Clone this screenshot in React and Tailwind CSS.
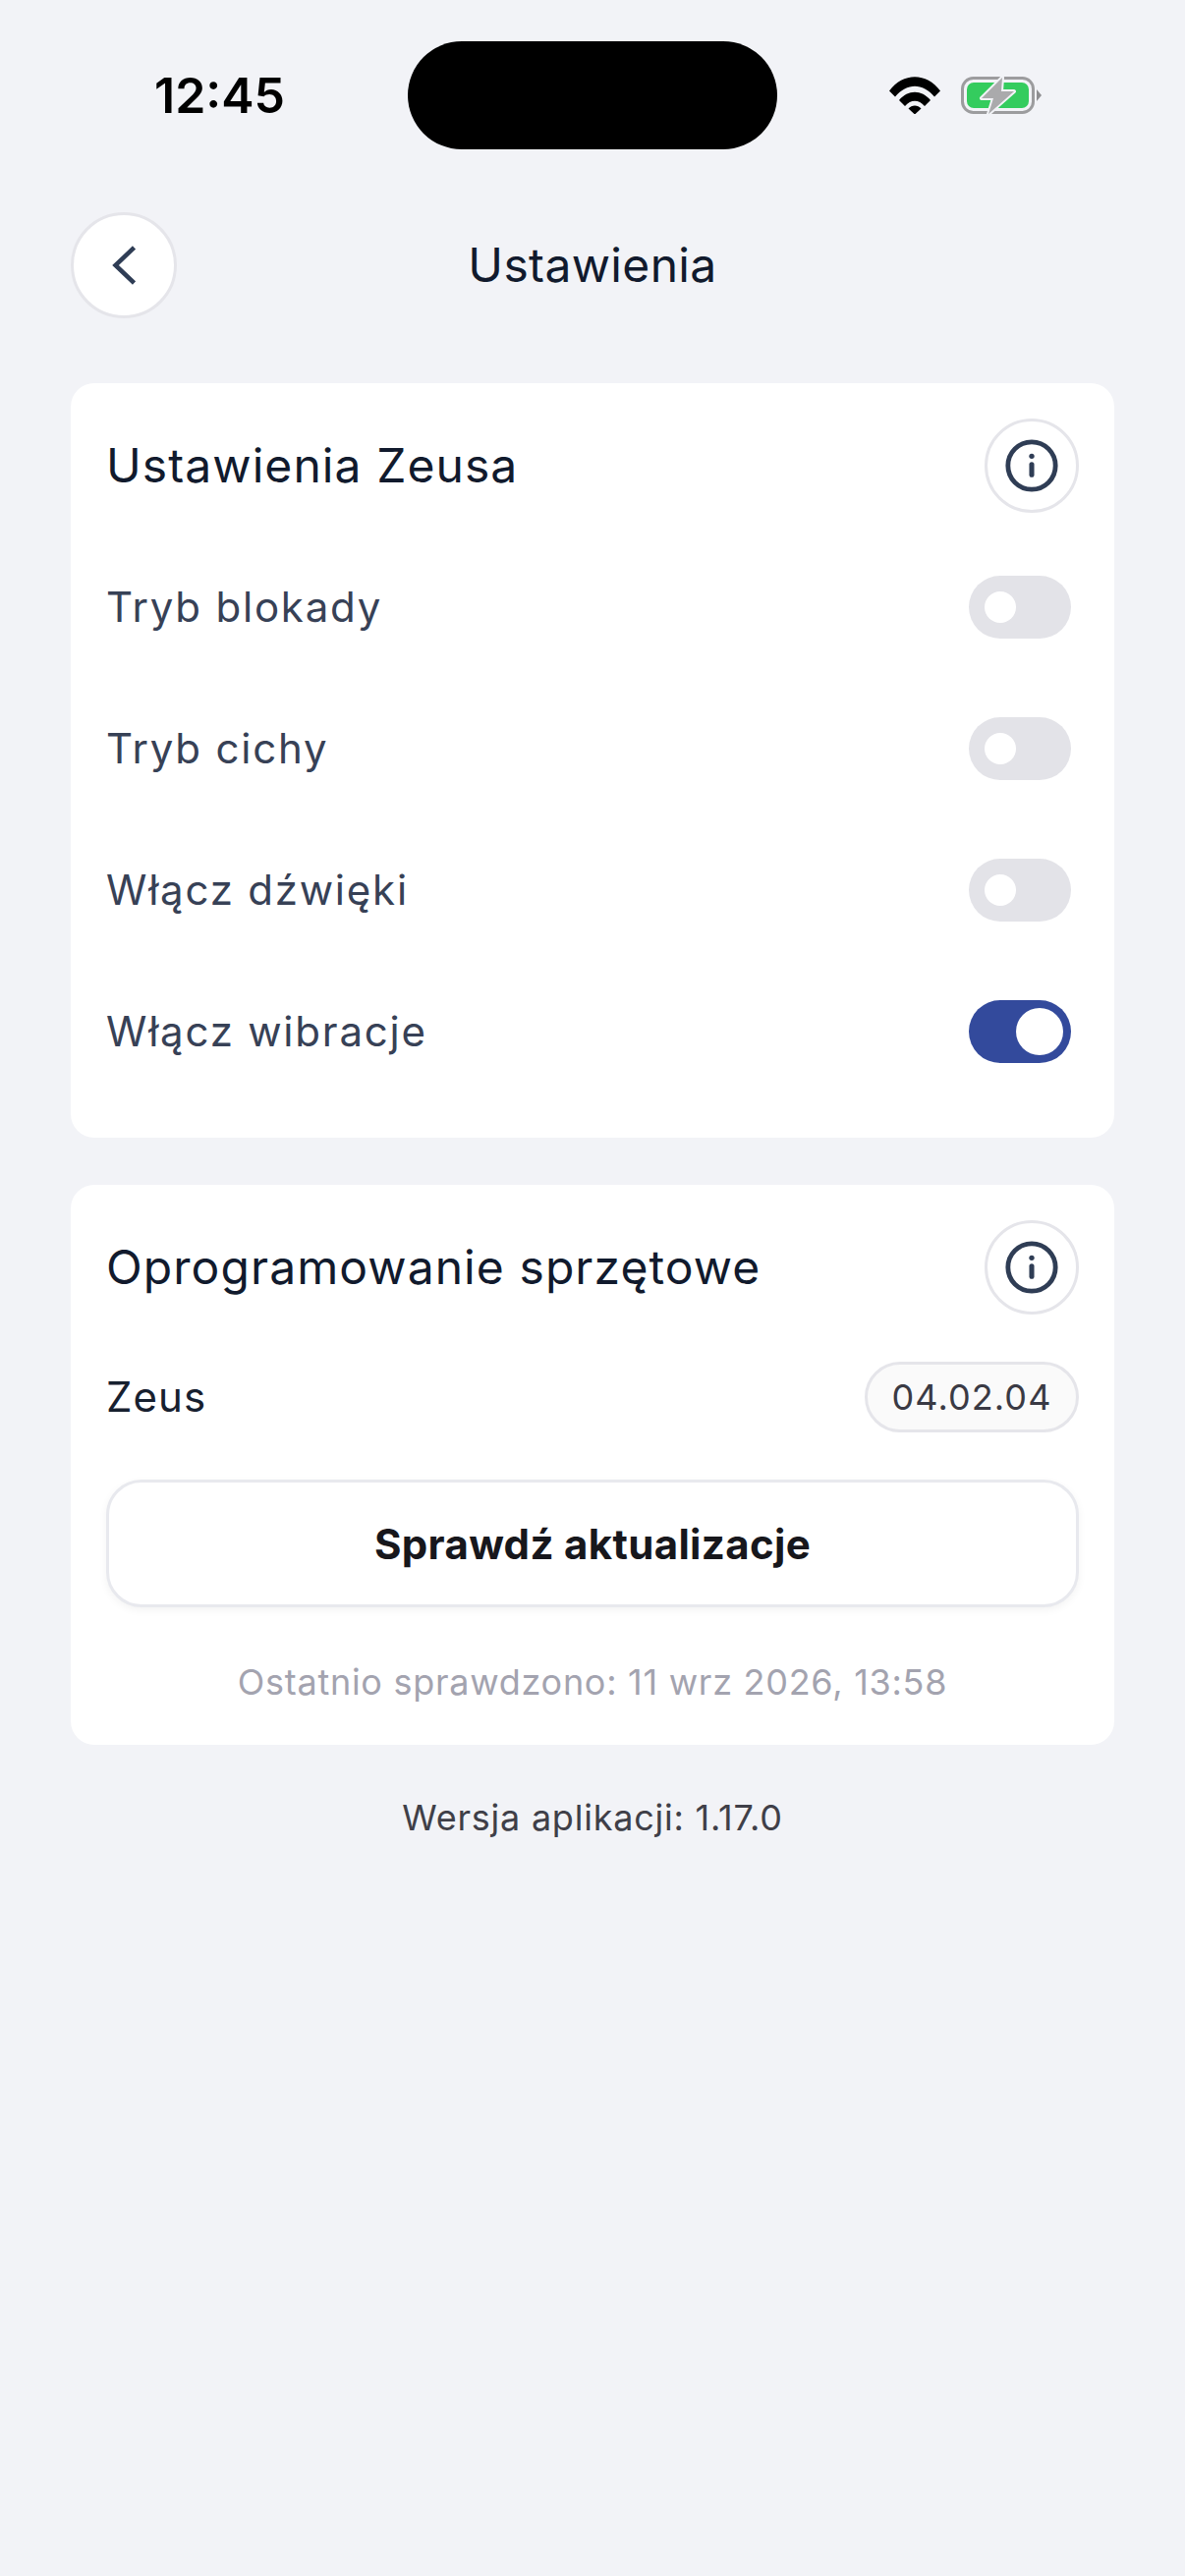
const font = { fontFamily: '"Inter", "Noto Sans", sans-serif' };

function InfoButton() {
  return (
    <button className="flex h-[96px] w-[96px] shrink-0 items-center justify-center rounded-full border-[3px] border-[#e5e5ea] bg-white">
      <svg width="58" height="58" viewBox="0 0 24 24" fill="none" stroke="#2f3d55" strokeWidth="2" strokeLinecap="round">
        <circle cx="12" cy="12" r="10" />
        <path d="M12 11.5v4.3" strokeWidth="2.1" />
        <circle cx="12" cy="8" r="1.1" fill="#2f3d55" stroke="none" />
      </svg>
    </button>
  );
}

function Toggle({ on }) {
  return on ? (
    <div className="mr-[8px] flex h-[64px] w-[104px] items-center justify-end rounded-full bg-[#334a9c] pr-[8px]">
      <div className="h-[48px] w-[48px] rounded-full bg-white" />
    </div>
  ) : (
    <div className="mr-[8px] flex h-[64px] w-[104px] items-center rounded-full bg-[#e3e3e8] pl-[16px]">
      <div className="h-[32px] w-[32px] rounded-full bg-white" />
    </div>
  );
}

function Row({ label, on }) {
  return (
    <div className="flex h-[64px] items-center justify-between">
      <span className="text-[42px] font-normal leading-none tracking-[1.78px] text-[#374156]">{label}</span>
      <Toggle on={on} />
    </div>
  );
}

export default function App() {
  return (
    <div style={font} className="min-h-[2622px] bg-[#f2f3f7]">
      <div className="flex items-center pl-[157px] pt-[42px]">
        <span className="w-[258px] text-[50px] font-semibold leading-none text-black">12:45</span>
        <div className="h-[110px] w-[376px] rounded-full bg-black" />
        <svg className="ml-[114px]" width="52" height="38" viewBox="0 0 52 38">
          <path d="M0 14.5 C14 -4.5 38 -4.5 52 14.5 L46 20.5 C34 6 18 6 6 20.5Z" fill="#000" />
          <path d="M10 24 C19 13 33 13 42 24 L36 30 C30 23 22 23 16 30Z" fill="#000" />
          <path d="M19.5 32.5 C23 28.5 29 28.5 32.5 32.5 L26 38.5Z" fill="#000" />
        </svg>
        <svg className="ml-[21px]" width="82" height="38" viewBox="0 0 82 38">
          <rect x="1.5" y="1.5" width="72" height="35" rx="11" fill="none" stroke="#9c9c9e" strokeWidth="3" />
          <rect x="6" y="6" width="63" height="26" rx="7" fill="#34cc5e" />
          <path d="M77 13 L82 19 L77 25 Z" fill="#8e8e90" />
          <path d="M42 1 L21 22 H33 L28 38 L54 15 H41 Z" fill="#aaaaac" stroke="#f2f3f7" strokeWidth="4" strokeLinejoin="round" paintOrder="stroke" />
        </svg>
      </div>

      <div className="mt-[64px] grid grid-cols-[108px_1fr_108px] items-center px-[72px]">
        <button className="flex h-[108px] w-[108px] items-center justify-center rounded-full border-[3px] border-[#e5e5ea] bg-white">
          <svg width="24" height="40" viewBox="0 0 24 40" fill="none" stroke="#2f3d55" strokeWidth="4.5" strokeLinejoin="miter">
            <path d="M22.5 2 L3.5 20 L22.5 38" />
          </svg>
        </button>
        <h1 className="text-center text-[48px] font-normal leading-none tracking-[0.35px] text-[#111a2d]">Ustawienia</h1>
        <div />
      </div>

      <div className="mx-[72px] mt-[66px] flex flex-col gap-[48px]">
        <section className="rounded-[24px] bg-white px-[36px] pb-[76px] pt-[36px]">
          <div className="mb-[64px] flex items-center justify-between">
            <h2 className="text-[48px] font-normal leading-none tracking-[1.08px] text-[#111a2d]">Ustawienia Zeusa</h2>
            <InfoButton />
          </div>
          <div className="flex flex-col gap-[80px]">
            <Row label="Tryb blokady" />
            <Row label="Tryb cichy" />
            <Row label="Włącz dźwięki" />
            <Row label="Włącz wibracje" on />
          </div>
        </section>

        <section className="rounded-[24px] bg-white px-[36px] pb-[44px] pt-[36px]">
          <div className="flex items-center justify-between">
            <h2 className="text-[48px] font-normal leading-none tracking-[1.08px] text-[#111a2d]">Oprogramowanie sprzętowe</h2>
            <InfoButton />
          </div>
          <div className="mt-[48px] flex items-center justify-between">
            <span className="text-[42px] font-normal leading-none tracking-[1.05px] text-[#17202f]">Zeus</span>
            <span className="flex h-[72px] w-[218px] items-center justify-center rounded-full border-[3px] border-[#e5e5ea] bg-[#fafafa] text-[36px] leading-none tracking-[1.1px] text-[#3a3a44]">04.02.04</span>
          </div>
          <button className="mt-[48px] flex h-[130px] w-full items-center justify-center rounded-[36px] border-[3px] border-[#e8e9ee] bg-white text-[42px] font-bold tracking-[0.33px] text-[#17171c] shadow-[0_3px_9px_rgba(0,0,0,0.05)]">
            Sprawdź aktualizacje
          </button>
          <p className="mt-[56px] text-center text-[36px] leading-[40px] tracking-[0.72px] text-[#a3a3af]">Ostatnio sprawdzono: 11 wrz 2026, 13:58</p>
        </section>
      </div>

      <p className="mt-[54px] text-center text-[36px] leading-[40px] tracking-[0.77px] text-[#3f3f48]">Wersja aplikacji: 1.17.0</p>
    </div>
  );
}
